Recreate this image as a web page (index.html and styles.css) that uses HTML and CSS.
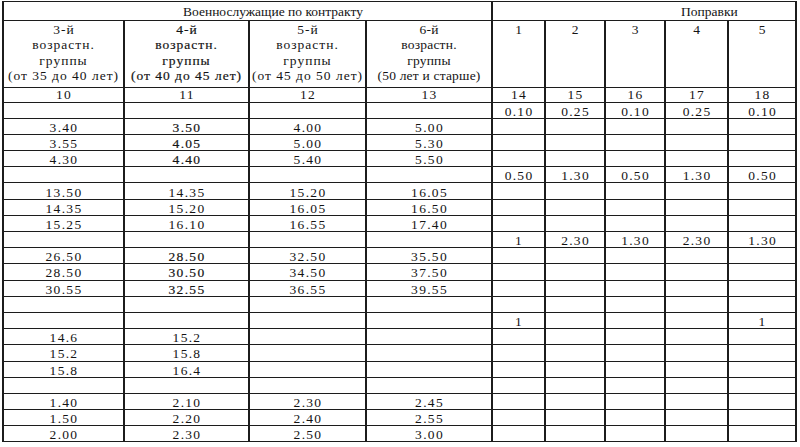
FILE: index.html
```html
<!DOCTYPE html>
<html lang="ru">
<head>
<meta charset="utf-8">
<title>Военнослужащие по контракту — поправки</title>
<link rel="stylesheet" href="styles.css">
</head>
<body>
<table class="sheet">
  <colgroup>
    <col class="w10"><col class="w11"><col class="w12"><col class="w13">
    <col class="w14"><col class="w15"><col class="w16"><col class="w17"><col class="w18">
  </colgroup>
  <thead>
    <tr class="r-group">
      <th colspan="4" class="group group-main">Военнослужащие по контракту</th>
      <th colspan="5" class="group group-fix">Поправки</th>
    </tr>
    <tr class="r-head">
      <th>3-й<br>возрастн.<br>группы<br>(от 35 до 40 лет)</th>
      <th class="dark">4-й<br>возрастн.<br>группы<br>(от 40 до 45 лет)</th>
      <th>5-й<br>возрастн.<br>группы<br>(от 45 до 50 лет)</th>
      <th class="narrow">6-й<br>возрастн.<br>группы<br>(50 лет и старше)</th>
      <th>1</th><th>2</th><th>3</th><th>4</th><th>5</th>
    </tr>
    <tr class="r-num">
      <th>10</th><th>11</th><th>12</th><th>13</th><th>14</th><th>15</th><th>16</th><th>17</th><th>18</th>
    </tr>
  </thead>
  <tbody>
    <tr><td></td><td></td><td></td><td></td><td>0.10</td><td>0.25</td><td>0.10</td><td>0.25</td><td>0.10</td></tr>
    <tr><td>3.40</td><td class="dark">3.50</td><td>4.00</td><td>5.00</td><td></td><td></td><td></td><td></td><td></td></tr>
    <tr><td>3.55</td><td class="dark">4.05</td><td>5.00</td><td>5.30</td><td></td><td></td><td></td><td></td><td></td></tr>
    <tr><td>4.30</td><td class="dark">4.40</td><td>5.40</td><td>5.50</td><td></td><td></td><td></td><td></td><td></td></tr>
    <tr><td></td><td></td><td></td><td></td><td>0.50</td><td>1.30</td><td>0.50</td><td>1.30</td><td>0.50</td></tr>
    <tr><td>13.50</td><td>14.35</td><td>15.20</td><td>16.05</td><td></td><td></td><td></td><td></td><td></td></tr>
    <tr><td>14.35</td><td>15.20</td><td>16.05</td><td>16.50</td><td></td><td></td><td></td><td></td><td></td></tr>
    <tr><td>15.25</td><td>16.10</td><td>16.55</td><td>17.40</td><td></td><td></td><td></td><td></td><td></td></tr>
    <tr><td></td><td></td><td></td><td></td><td>1</td><td>2.30</td><td>1.30</td><td>2.30</td><td>1.30</td></tr>
    <tr><td>26.50</td><td class="dark">28.50</td><td>32.50</td><td>35.50</td><td></td><td></td><td></td><td></td><td></td></tr>
    <tr><td>28.50</td><td class="dark">30.50</td><td>34.50</td><td>37.50</td><td></td><td></td><td></td><td></td><td></td></tr>
    <tr><td>30.55</td><td class="dark">32.55</td><td>36.55</td><td>39.55</td><td></td><td></td><td></td><td></td><td></td></tr>
    <tr><td></td><td></td><td></td><td></td><td></td><td></td><td></td><td></td><td></td></tr>
    <tr><td></td><td></td><td></td><td></td><td>1</td><td></td><td></td><td></td><td>1</td></tr>
    <tr><td>14.6</td><td>15.2</td><td></td><td></td><td></td><td></td><td></td><td></td><td></td></tr>
    <tr><td>15.2</td><td>15.8</td><td></td><td></td><td></td><td></td><td></td><td></td><td></td></tr>
    <tr><td>15.8</td><td>16.4</td><td></td><td></td><td></td><td></td><td></td><td></td><td></td></tr>
    <tr><td></td><td></td><td></td><td></td><td></td><td></td><td></td><td></td><td></td></tr>
    <tr><td>1.40</td><td>2.10</td><td>2.30</td><td>2.45</td><td></td><td></td><td></td><td></td><td></td></tr>
    <tr><td>1.50</td><td>2.20</td><td>2.40</td><td>2.55</td><td></td><td></td><td></td><td></td><td></td></tr>
    <tr><td>2.00</td><td>2.30</td><td>2.50</td><td>3.00</td><td></td><td></td><td></td><td></td><td></td></tr>
  </tbody>
</table>
</body>
</html>
```

FILE: styles.css
```css
html, body {
  margin: 0;
  padding: 0;
  background: #ffffff;
}

body {
  font-family: "Liberation Serif", "Times New Roman", serif;
  color: #141414;
}

.sheet {
  border-collapse: collapse;
  table-layout: fixed;
  width: 793px;
  margin: 1px 0 0 2px;
  font-size: 13.5px;
}

.w10 { width: 121px; }
.w11 { width: 125px; }
.w12 { width: 117px; }
.w13 { width: 126px; }
.w14 { width: 53px; }
.w15 { width: 60px; }
.w16 { width: 60px; }
.w17 { width: 63px; }
.w18 { width: 68px; }

.sheet th,
.sheet td {
  border-top: 1px solid #1c1c1c;
  border-bottom: 1px solid #1c1c1c;
  border-left: 2px solid #1c1c1c;
  border-right: 2px solid #1c1c1c;
  padding: 0;
  text-align: center;
  font-weight: normal;
  letter-spacing: 1.3px;
  text-indent: 1px;
  line-height: 13px;
  white-space: nowrap;
  overflow: hidden;
}

.r-group { height: 18.5px; }
.r-head { height: 67px; }
.r-num { height: 15px; }
.sheet tbody tr { height: 16.2px; }

.sheet .group {
  text-align: left;
  letter-spacing: 0;
  text-indent: 0;
  font-size: 13.5px;
  line-height: 15px;
  padding-top: 1px;
}

.sheet .group-main { padding-left: 179px; }
.sheet .group-fix { padding-left: 188px; }

.sheet .r-head th {
  vertical-align: top;
  line-height: 15.6px;
  letter-spacing: 1px;
  padding-top: 1px;
}

.sheet .r-head th.narrow {
  letter-spacing: 0.2px;
  text-indent: 0;
}

.sheet .r-num th {
  padding-top: 0;
}

.sheet tbody td {
  padding-top: 2px;
}

.sheet .dark {
  -webkit-text-stroke: 0.2px currentColor;
}
```
